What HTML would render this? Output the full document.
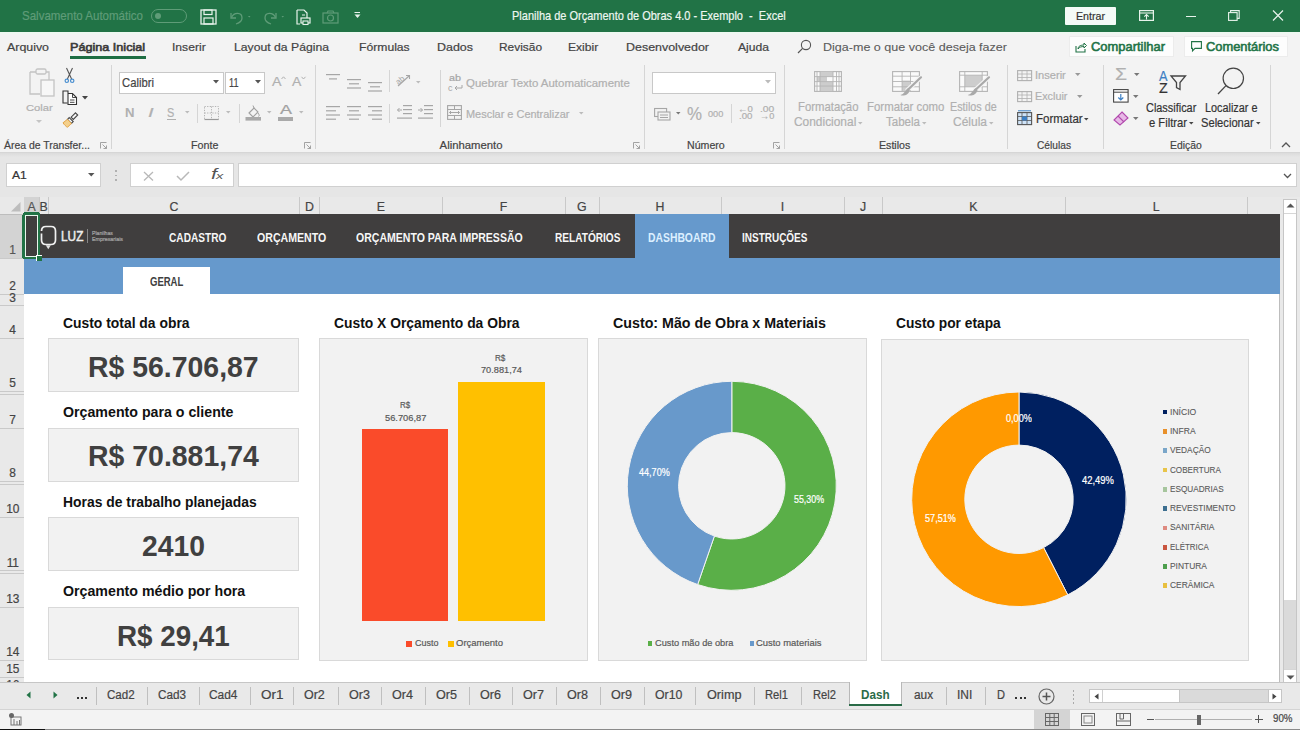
<!DOCTYPE html><html><head><meta charset="utf-8"><style>
html,body{margin:0;padding:0;}
body{width:1300px;height:730px;overflow:hidden;position:relative;background:#f3f3f3;font-family:"Liberation Sans",sans-serif;}
.t{position:absolute;white-space:nowrap;line-height:1;transform-origin:0 0;}
.r{position:absolute;box-sizing:border-box;}
.s{position:absolute;overflow:visible;}
</style></head><body>
<div class="r" style="left:0px;top:0px;width:1300px;height:32px;background:#217346;"></div>
<div class="r" style="left:0px;top:32px;width:1300px;height:2px;background:#eef8f1;"></div>
<div class="t" style="left:22.00px;top:10.00px;font-size:12.35px;color:#5f9c78;-webkit-text-stroke:0.2px #5f9c78;transform:scaleX(0.9322);">Salvamento Automático</div>
<div class="r" style="left:150.5px;top:8.5px;width:36px;height:14.5px;background:transparent;border:1.3px solid #5f9c78;border-radius:8px;"></div>
<div class="r" style="left:155px;top:12.5px;width:6px;height:6px;background:#5f9c78;border-radius:3px;"></div>
<svg class="s" style="left:200px;top:9px;" width="17" height="16" viewBox="0 0 17 16"><rect x="1" y="1" width="15" height="14" fill="none" stroke="#e8f3ec" stroke-width="1.3"/><rect x="4" y="1" width="8" height="4.5" fill="none" stroke="#e8f3ec" stroke-width="1.2"/><rect x="4" y="9" width="9" height="6" fill="none" stroke="#e8f3ec" stroke-width="1.2"/></svg>
<svg class="s" style="left:228px;top:9px;" width="24" height="16" viewBox="0 0 24 16"><path d="M3 4 L3 9 L8 9" fill="none" stroke="#5f9c78" stroke-width="1.3"/><path d="M3.5 8.5 C6 3 14 3 14 9 C14 12 11 14 8 15" fill="none" stroke="#5f9c78" stroke-width="1.3"/><path d="M20 7 l2.5 0 l-1.25 1.6z" fill="#5f9c78"/></svg>
<svg class="s" style="left:262px;top:9px;" width="24" height="16" viewBox="0 0 24 16"><path d="M14 4 L14 9 L9 9" fill="none" stroke="#5f9c78" stroke-width="1.3"/><path d="M13.5 8.5 C11 3 3 3 3 9 C3 12 6 14 9 15" fill="none" stroke="#5f9c78" stroke-width="1.3"/><path d="M19.5 7 l2.5 0 l-1.25 1.6z" fill="#5f9c78"/></svg>
<svg class="s" style="left:296px;top:9px;" width="15" height="16" viewBox="0 0 15 16"><path d="M1 1 H8 L11 4 V9" fill="none" stroke="#e8f3ec" stroke-width="1.2"/><path d="M1 1 V15 H4" fill="none" stroke="#e8f3ec" stroke-width="1.2"/><rect x="5" y="9" width="9" height="5" fill="none" stroke="#e8f3ec" stroke-width="1.2"/><rect x="7" y="12" width="5" height="3.5" fill="#217346" stroke="#e8f3ec" stroke-width="1.1"/><path d="M6 6 H9" stroke="#e8f3ec"/></svg>
<svg class="s" style="left:322px;top:10px;" width="17" height="14" viewBox="0 0 17 14"><rect x="1" y="3" width="15" height="10" fill="none" stroke="#5f9c78" stroke-width="1.2"/><circle cx="8.5" cy="8" r="3" fill="none" stroke="#5f9c78" stroke-width="1.2"/><path d="M5 3 L6 1 H11 L12 3" fill="none" stroke="#5f9c78" stroke-width="1.1"/></svg>
<svg class="s" style="left:354px;top:12px;" width="7" height="7" viewBox="0 0 7 7"><path d="M0.5 0.5 H6" stroke="#e8f3ec" stroke-width="1"/><path d="M0.5 2.5 H6.5 L3.5 6z" fill="#e8f3ec"/></svg>
<div class="t" style="left:512.00px;top:10.00px;font-size:12.35px;color:#eef7f1;-webkit-text-stroke:0.2px #eef7f1;transform:scaleX(0.8906);white-space:pre;">Planilha de Orçamento de Obras 4.0 - Exemplo  -  Excel</div>
<div class="r" style="left:1065px;top:7px;width:51px;height:18px;background:#f4fbf7;border-radius:1px;"></div>
<div class="t" style="left:1076.00px;top:10.00px;font-size:11.63px;color:#333;-webkit-text-stroke:0.2px #333;transform:scaleX(0.9158);">Entrar</div>
<svg class="s" style="left:1139px;top:10px;" width="15" height="11" viewBox="0 0 15 11"><rect x="0.6" y="0.6" width="13.8" height="9.8" fill="none" stroke="#e8f3ec" stroke-width="1.2"/><path d="M0.6 3 H14.4" stroke="#e8f3ec" stroke-width="1.1"/><path d="M7.5 9.5 V4.5 M5.3 6.7 L7.5 4.5 L9.7 6.7" fill="none" stroke="#e8f3ec" stroke-width="1.1"/></svg>
<div class="r" style="left:1185.5px;top:15.5px;width:10.5px;height:1.2px;background:#e8f3ec;"></div>
<svg class="s" style="left:1228px;top:10px;" width="12" height="11" viewBox="0 0 12 11"><rect x="0.6" y="2.6" width="8.5" height="7.8" fill="none" stroke="#e8f3ec" stroke-width="1.1"/><path d="M2.6 2.6 V0.6 H11.2 V8.4 H9.1" fill="none" stroke="#e8f3ec" stroke-width="1.1"/></svg>
<svg class="s" style="left:1272px;top:10px;" width="12" height="11" viewBox="0 0 12 11"><path d="M1 0.5 L11 10.5 M11 0.5 L1 10.5" stroke="#e8f3ec" stroke-width="1.2"/></svg>
<div class="t" style="left:7.00px;top:42.00px;font-size:11.05px;color:#444;-webkit-text-stroke:0.2px #444;transform:scaleX(1.1213);">Arquivo</div>
<div class="t" style="left:171.50px;top:42.00px;font-size:11.05px;color:#444;-webkit-text-stroke:0.2px #444;transform:scaleX(1.0980);">Inserir</div>
<div class="t" style="left:234.00px;top:42.00px;font-size:11.05px;color:#444;-webkit-text-stroke:0.2px #444;transform:scaleX(1.1048);">Layout da Página</div>
<div class="t" style="left:358.50px;top:42.00px;font-size:11.05px;color:#444;-webkit-text-stroke:0.2px #444;transform:scaleX(1.1013);">Fórmulas</div>
<div class="t" style="left:437.00px;top:42.00px;font-size:11.05px;color:#444;-webkit-text-stroke:0.2px #444;transform:scaleX(1.1274);">Dados</div>
<div class="t" style="left:498.50px;top:42.00px;font-size:11.05px;color:#444;-webkit-text-stroke:0.2px #444;transform:scaleX(1.0774);">Revisão</div>
<div class="t" style="left:568.30px;top:42.00px;font-size:11.05px;color:#444;-webkit-text-stroke:0.2px #444;transform:scaleX(1.0933);">Exibir</div>
<div class="t" style="left:626.00px;top:42.00px;font-size:11.05px;color:#444;-webkit-text-stroke:0.2px #444;transform:scaleX(1.1264);">Desenvolvedor</div>
<div class="t" style="left:737.50px;top:42.00px;font-size:11.05px;color:#444;-webkit-text-stroke:0.2px #444;transform:scaleX(1.0972);">Ajuda</div>
<div class="t" style="left:69.70px;top:42.00px;font-size:11.05px;color:#3a3a3a;transform:scaleX(1.1429);-webkit-text-stroke:0.6px #3a3a3a;">Página Inicial</div>
<div class="r" style="left:69.7px;top:56px;width:76.2px;height:3px;background:#1e6e43;"></div>
<svg class="s" style="left:797px;top:39px;" width="15" height="15" viewBox="0 0 15 15"><circle cx="9" cy="6" r="4.6" fill="none" stroke="#555" stroke-width="1.1"/><path d="M5.6 9.4 L1 14" stroke="#555" stroke-width="1.2"/></svg>
<div class="t" style="left:822.50px;top:42.00px;font-size:11.05px;color:#5c5c5c;transform:scaleX(1.1350);-webkit-text-stroke:0.1px #5c5c5c;">Diga-me o que você deseja fazer</div>
<div class="r" style="left:1069px;top:35.5px;width:105px;height:21.5px;background:#fdfdfd;border:1px solid #ececec;"></div>
<svg class="s" style="left:1075px;top:41px;" width="12" height="12" viewBox="0 0 12 12"><path d="M1 5 V11 H10 V8" fill="none" stroke="#217346" stroke-width="1.1"/><path d="M3 8 C3 5 6 4 9 4 V2 L11.5 4.5 L9 7 V5.5 C6.5 5.5 4.5 6 3 8z" fill="none" stroke="#217346" stroke-width="1"/></svg>
<div class="t" style="left:1091.00px;top:41.00px;font-size:12.21px;color:#217346;transform:scaleX(1.0588);-webkit-text-stroke:0.55px #217346;">Compartilhar</div>
<div class="r" style="left:1184px;top:35.5px;width:104px;height:21.5px;background:#fdfdfd;border:1px solid #ececec;"></div>
<svg class="s" style="left:1191px;top:41px;" width="11" height="11" viewBox="0 0 11 11"><path d="M0.6 0.6 H10.4 V7.4 H4 L1.5 10 V7.4 H0.6z" fill="none" stroke="#217346" stroke-width="1.1"/></svg>
<div class="t" style="left:1206.00px;top:41.00px;font-size:12.21px;color:#217346;transform:scaleX(1.0547);-webkit-text-stroke:0.55px #217346;">Comentários</div>
<div class="r" style="left:110.6px;top:65px;width:1px;height:84px;background:#d5d5d5;"></div>
<div class="r" style="left:314.5px;top:65px;width:1px;height:84px;background:#d5d5d5;"></div>
<div class="r" style="left:643.5px;top:65px;width:1px;height:84px;background:#d5d5d5;"></div>
<div class="r" style="left:784.3px;top:65px;width:1px;height:84px;background:#d5d5d5;"></div>
<div class="r" style="left:1006.5px;top:65px;width:1px;height:84px;background:#d5d5d5;"></div>
<div class="r" style="left:1102.7px;top:65px;width:1px;height:84px;background:#d5d5d5;"></div>
<div class="r" style="left:1269.6px;top:65px;width:1px;height:84px;background:#d5d5d5;"></div>
<div class="t" style="left:4.00px;top:140.00px;font-size:11.34px;color:#444;-webkit-text-stroke:0.2px #444;transform:scaleX(0.9221);">Área de Transfer...</div>
<div class="t" style="left:190.80px;top:140.00px;font-size:11.34px;color:#444;-webkit-text-stroke:0.2px #444;transform:scaleX(0.9451);">Fonte</div>
<div class="t" style="left:439.60px;top:140.00px;font-size:11.34px;color:#444;-webkit-text-stroke:0.2px #444;">Alinhamento</div>
<div class="t" style="left:687.00px;top:140.00px;font-size:11.34px;color:#444;-webkit-text-stroke:0.2px #444;transform:scaleX(0.9374);">Número</div>
<div class="t" style="left:879.00px;top:140.00px;font-size:11.34px;color:#444;-webkit-text-stroke:0.2px #444;transform:scaleX(0.9373);">Estilos</div>
<div class="t" style="left:1037.00px;top:140.00px;font-size:11.34px;color:#444;-webkit-text-stroke:0.2px #444;transform:scaleX(0.8992);">Células</div>
<div class="t" style="left:1169.60px;top:140.00px;font-size:11.34px;color:#444;-webkit-text-stroke:0.2px #444;transform:scaleX(0.9144);">Edição</div>
<svg class="s" style="left:100px;top:142px;" width="7" height="7" viewBox="0 0 7 7"><path d="M0.5 6.5 V0.5 H6.5" fill="none" stroke="#999" stroke-width="0.9"/><path d="M2.5 2.5 L6.5 6.5 M6.5 3.5 V6.5 H3.5" fill="none" stroke="#999" stroke-width="0.9"/></svg>
<svg class="s" style="left:304px;top:142px;" width="7" height="7" viewBox="0 0 7 7"><path d="M0.5 6.5 V0.5 H6.5" fill="none" stroke="#999" stroke-width="0.9"/><path d="M2.5 2.5 L6.5 6.5 M6.5 3.5 V6.5 H3.5" fill="none" stroke="#999" stroke-width="0.9"/></svg>
<svg class="s" style="left:633px;top:141.5px;" width="7" height="7" viewBox="0 0 7 7"><path d="M0.5 6.5 V0.5 H6.5" fill="none" stroke="#999" stroke-width="0.9"/><path d="M2.5 2.5 L6.5 6.5 M6.5 3.5 V6.5 H3.5" fill="none" stroke="#999" stroke-width="0.9"/></svg>
<svg class="s" style="left:773px;top:142px;" width="7" height="7" viewBox="0 0 7 7"><path d="M0.5 6.5 V0.5 H6.5" fill="none" stroke="#999" stroke-width="0.9"/><path d="M2.5 2.5 L6.5 6.5 M6.5 3.5 V6.5 H3.5" fill="none" stroke="#999" stroke-width="0.9"/></svg>
<svg class="s" style="left:28px;top:68px;" width="27" height="29" viewBox="0 0 27 29"><path d="M2 4 H8 M18 4 H21 V12" fill="none" stroke="#c4c4c4" stroke-width="1.3"/><path d="M2 4 V26 H12" fill="none" stroke="#c4c4c4" stroke-width="1.3"/><rect x="8" y="1" width="10" height="5" rx="1.5" fill="none" stroke="#c4c4c4" stroke-width="1.3"/><rect x="13" y="12" width="13" height="16" fill="#f7f7f7" stroke="#c4c4c4" stroke-width="1.3"/></svg>
<div class="t" style="left:26.00px;top:103.00px;font-size:9.88px;color:#b0b0b0;-webkit-text-stroke:0.2px #b0b0b0;transform:scaleX(1.1304);">Colar</div>
<svg class="s" style="left:36px;top:120px;" width="6" height="4" viewBox="0 0 6 4"><path d="M0 0 H6 L3 3z" fill="#c4c4c4"/></svg>
<svg class="s" style="left:62px;top:67px;" width="15" height="17" viewBox="0 0 15 17"><path d="M4.5 1 L9.6 12 M10.5 1 L5.4 12" stroke="#555" stroke-width="1.1" fill="none"/><circle cx="4.8" cy="13.8" r="1.7" fill="none" stroke="#4a8fd0" stroke-width="1.2"/><circle cx="10.2" cy="13.8" r="1.7" fill="none" stroke="#4a8fd0" stroke-width="1.2"/></svg>
<svg class="s" style="left:62px;top:90px;" width="17" height="17" viewBox="0 0 17 17"><path d="M6 3 V1 H1 V13 H5.5" fill="none" stroke="#333" stroke-width="1.1"/><path d="M6 3.5 H10.5 L14.5 7.5 V14.5 H6z" fill="#fff" stroke="#333" stroke-width="1.1"/><path d="M10.5 3.5 V7.5 H14.5" fill="none" stroke="#333" stroke-width="0.9"/><path d="M8 10 H12.5 M8 12.3 H12.5" stroke="#333" stroke-width="0.9"/></svg>
<svg class="s" style="left:82px;top:96px;" width="7" height="4" viewBox="0 0 7 4"><path d="M0 0 H6 L3 3.5z" fill="#444"/></svg>
<svg class="s" style="left:62px;top:112px;" width="17" height="16" viewBox="0 0 17 16"><path d="M13.5 0.8 L15.7 3 L11.3 7.4 L9.1 5.2z" fill="none" stroke="#444" stroke-width="1.1"/><path d="M7.2 5.6 L11.2 9.6 L9.4 11.4 L5.4 7.4z" fill="#fff" stroke="#444" stroke-width="1.1"/><path d="M5.4 7.4 L9.4 11.4 L5.5 15.3 C4 14.5 2 12.5 1 10.8z" fill="#f4d08c" stroke="#e3a548" stroke-width="1"/></svg>
<div class="r" style="left:119.4px;top:72px;width:105px;height:21.6px;background:#fff;border:1px solid #c8c8c8;"></div>
<div class="t" style="left:122.00px;top:77.00px;font-size:12.06px;color:#444;-webkit-text-stroke:0.2px #444;transform:scaleX(0.9359);">Calibri</div>
<svg class="s" style="left:213px;top:80px;" width="7" height="4" viewBox="0 0 7 4"><path d="M0 0 H6 L3 3.5z" fill="#555"/></svg>
<div class="r" style="left:225px;top:72px;width:40.4px;height:21.6px;background:#fff;border:1px solid #c8c8c8;"></div>
<div class="t" style="left:228.50px;top:77.00px;font-size:12.06px;color:#444;-webkit-text-stroke:0.2px #444;transform:scaleX(0.7586);">11</div>
<svg class="s" style="left:255px;top:80px;" width="7" height="4" viewBox="0 0 7 4"><path d="M0 0 H6 L3 3.5z" fill="#555"/></svg>
<div class="t" style="left:271.50px;top:76.00px;font-size:12.94px;color:#b0b0b0;-webkit-text-stroke:0.2px #b0b0b0;transform:scaleX(1.1010);">A</div>
<svg class="s" style="left:281px;top:76px;" width="5" height="4" viewBox="0 0 5 4"><path d="M0.5 3 L2.5 0.8 L4.5 3" fill="none" stroke="#a9a9a9" stroke-width="0.9"/></svg>
<div class="t" style="left:291.70px;top:76.00px;font-size:12.94px;color:#b0b0b0;-webkit-text-stroke:0.2px #b0b0b0;transform:scaleX(1.0778);">A</div>
<svg class="s" style="left:301px;top:76px;" width="5" height="4" viewBox="0 0 5 4"><path d="M0.5 0.8 L2.5 3 L4.5 0.8" fill="none" stroke="#a9a9a9" stroke-width="0.9"/></svg>
<div class="t" style="left:124.50px;top:107.00px;font-size:12.94px;color:#b0b0b0;font-weight:bold;transform:scaleX(1.0169);">N</div>
<div class="t" style="left:148.00px;top:107.00px;font-size:12.94px;color:#b0b0b0;-webkit-text-stroke:0.2px #b0b0b0;transform:scaleX(1.5582);font-style:italic;font-family:"Liberation Serif",serif;">I</div>
<div class="t" style="left:167.30px;top:107.00px;font-size:12.94px;color:#b0b0b0;-webkit-text-stroke:0.2px #b0b0b0;transform:scaleX(0.8460);">S</div>
<div class="r" style="left:166.5px;top:118.5px;width:9px;height:1px;background:#b0b0b0;"></div>
<svg class="s" style="left:185px;top:111px;" width="5" height="3" viewBox="0 0 5 3"><path d="M0 0 H4.5 L2.25 2.5z" fill="#bbb"/></svg>
<div class="r" style="left:197.2px;top:104px;width:1px;height:19px;background:#d5d5d5;"></div>
<svg class="s" style="left:204px;top:106px;" width="16" height="15" viewBox="0 0 16 15"><rect x="0.5" y="0.5" width="14" height="13" fill="none" stroke="#b5b5b5" stroke-width="1" stroke-dasharray="1.3 1.3"/><path d="M7.5 0.5 V13.5 M0.5 7 H14.5" stroke="#b5b5b5" stroke-dasharray="1.3 1.3"/><path d="M0.5 13.5 H14.5" stroke="#999" stroke-width="1.2"/></svg>
<svg class="s" style="left:226px;top:111px;" width="5" height="3" viewBox="0 0 5 3"><path d="M0 0 H4.5 L2.25 2.5z" fill="#bbb"/></svg>
<div class="r" style="left:238.8px;top:104px;width:1px;height:19px;background:#d5d5d5;"></div>
<svg class="s" style="left:245px;top:104px;" width="17" height="17" viewBox="0 0 17 17"><path d="M4 9 L9 4 L13 8 L8 13z" fill="none" stroke="#a0a0a0" stroke-width="1.1"/><path d="M9 4 L8 1.5" stroke="#a0a0a0"/><path d="M13 9 C14.5 11 14.5 12 13.5 12.5" fill="none" stroke="#a0a0a0"/><rect x="0.5" y="13" width="15.5" height="3.6" fill="#a9a9a9"/></svg>
<svg class="s" style="left:267px;top:111px;" width="5" height="3" viewBox="0 0 5 3"><path d="M0 0 H4.5 L2.25 2.5z" fill="#bbb"/></svg>
<div class="t" style="left:279.50px;top:104.00px;font-size:12.35px;color:#a0a0a0;-webkit-text-stroke:0.2px #a0a0a0;transform:scaleX(1.4561);">A</div>
<div class="r" style="left:278px;top:117px;width:15px;height:3.6px;background:#a9a9a9;"></div>
<svg class="s" style="left:299px;top:111px;" width="5" height="3" viewBox="0 0 5 3"><path d="M0 0 H4.5 L2.25 2.5z" fill="#bbb"/></svg>
<svg class="s" style="left:326px;top:74.4px;" width="15" height="10" viewBox="0 0 15 10"><rect x="0" y="0.0" width="14" height="1.2" fill="#a6a6a6"/><rect x="3" y="4.3" width="8" height="1.2" fill="#a6a6a6"/></svg>
<div class="r" style="left:326px;top:83px;width:14px;height:0px;background:transparent;"></div>
<svg class="s" style="left:347px;top:78.5px;" width="15" height="14" viewBox="0 0 15 14"><rect x="0" y="0.0" width="14" height="1.2" fill="#a6a6a6"/><rect x="2" y="4.2" width="10" height="1.2" fill="#a6a6a6"/><rect x="0" y="8.4" width="14" height="1.2" fill="#a6a6a6"/></svg>
<svg class="s" style="left:368px;top:81.5px;" width="15" height="14" viewBox="0 0 15 14"><rect x="0" y="0.0" width="14" height="1.2" fill="#a6a6a6"/><rect x="2" y="4.2" width="10" height="1.2" fill="#a6a6a6"/><rect x="0" y="8.4" width="14" height="1.2" fill="#a6a6a6"/></svg>
<div class="r" style="left:389.3px;top:70px;width:1px;height:22px;background:#d5d5d5;"></div>
<svg class="s" style="left:396px;top:74px;" width="17" height="15" viewBox="0 0 17 15"><path d="M2 12 L13 2" stroke="#a6a6a6" stroke-width="1.2"/><path d="M10 1.5 H13.5 V5" fill="none" stroke="#a6a6a6" stroke-width="1.1"/><text x="0" y="9" font-size="8" font-family="Liberation Sans" fill="#a6a6a6" transform="rotate(-40 4 7)">ab</text></svg>
<svg class="s" style="left:416px;top:81px;" width="5" height="3" viewBox="0 0 5 3"><path d="M0 0 H4.5 L2.25 2.5z" fill="#bbb"/></svg>
<div class="r" style="left:440.3px;top:70px;width:1px;height:57px;background:#d5d5d5;"></div>
<div class="t" style="left:449.00px;top:73.00px;font-size:9.45px;color:#a6a6a6;-webkit-text-stroke:0.2px #a6a6a6;transform:scaleX(1.1419);">ab</div>
<svg class="s" style="left:448px;top:84px;" width="16" height="8" viewBox="0 0 16 8"><text x="0" y="7" font-size="9" font-family="Liberation Sans" fill="#a6a6a6">c</text><path d="M14 1 V4 H7 M9 2 L7 4 L9 6" fill="none" stroke="#a6a6a6" stroke-width="1"/></svg>
<div class="t" style="left:465.60px;top:78.00px;font-size:10.76px;color:#b0b0b0;-webkit-text-stroke:0.2px #b0b0b0;transform:scaleX(1.0645);">Quebrar Texto Automaticamente</div>
<svg class="s" style="left:326px;top:106px;" width="15" height="18" viewBox="0 0 15 18"><rect x="0" y="0.0" width="14" height="1.2" fill="#a6a6a6"/><rect x="0" y="4.2" width="10" height="1.2" fill="#a6a6a6"/><rect x="0" y="8.4" width="14" height="1.2" fill="#a6a6a6"/><rect x="0" y="12.600000000000001" width="10" height="1.2" fill="#a6a6a6"/></svg>
<svg class="s" style="left:347px;top:106px;" width="15" height="18" viewBox="0 0 15 18"><rect x="0" y="0.0" width="14" height="1.2" fill="#a6a6a6"/><rect x="2" y="4.2" width="10" height="1.2" fill="#a6a6a6"/><rect x="0" y="8.4" width="14" height="1.2" fill="#a6a6a6"/><rect x="2" y="12.600000000000001" width="10" height="1.2" fill="#a6a6a6"/></svg>
<svg class="s" style="left:368px;top:106px;" width="15" height="18" viewBox="0 0 15 18"><rect x="0" y="0.0" width="14" height="1.2" fill="#a6a6a6"/><rect x="4" y="4.2" width="10" height="1.2" fill="#a6a6a6"/><rect x="0" y="8.4" width="14" height="1.2" fill="#a6a6a6"/><rect x="4" y="12.600000000000001" width="10" height="1.2" fill="#a6a6a6"/></svg>
<div class="r" style="left:389.3px;top:104px;width:1px;height:19px;background:#d5d5d5;"></div>
<svg class="s" style="left:397px;top:105px;" width="16" height="15" viewBox="0 0 16 15"><rect x="6" y="0" width="9" height="1.2" fill="#a6a6a6"/><rect x="6" y="4" width="9" height="1.2" fill="#a6a6a6"/><rect x="6" y="8" width="9" height="1.2" fill="#a6a6a6"/><rect x="0" y="12.5" width="15" height="1.2" fill="#a6a6a6"/><path d="M5 5 H0.5 M2.5 3 L0.5 5 L2.5 7" fill="none" stroke="#a6a6a6" stroke-width="1"/></svg>
<svg class="s" style="left:418px;top:105px;" width="16" height="15" viewBox="0 0 16 15"><rect x="6" y="0" width="9" height="1.2" fill="#a6a6a6"/><rect x="6" y="4" width="9" height="1.2" fill="#a6a6a6"/><rect x="6" y="8" width="9" height="1.2" fill="#a6a6a6"/><rect x="0" y="12.5" width="15" height="1.2" fill="#a6a6a6"/><path d="M0 5 H4.5 M2.5 3 L4.5 5 L2.5 7" fill="none" stroke="#a6a6a6" stroke-width="1"/></svg>
<svg class="s" style="left:447px;top:105px;" width="15" height="15" viewBox="0 0 15 15"><rect x="0.6" y="0.6" width="13.8" height="13.8" fill="none" stroke="#a6a6a6" stroke-width="1.1"/><path d="M0.6 4.5 H14.4 M0.6 10.5 H14.4 M7.5 0.6 V4.5 M7.5 10.5 V14.4" stroke="#a6a6a6"/><path d="M2.5 7.5 H12.5 M4 6 L2.5 7.5 L4 9 M11 6 L12.5 7.5 L11 9" fill="none" stroke="#a6a6a6"/></svg>
<div class="t" style="left:465.60px;top:109.00px;font-size:11.05px;color:#b0b0b0;-webkit-text-stroke:0.2px #b0b0b0;transform:scaleX(0.9908);">Mesclar e Centralizar</div>
<svg class="s" style="left:579px;top:112px;" width="5" height="3" viewBox="0 0 5 3"><path d="M0 0 H4.5 L2.25 2.5z" fill="#bbb"/></svg>
<div class="r" style="left:652px;top:72px;width:124px;height:21.6px;background:#fff;border:1px solid #c8c8c8;"></div>
<svg class="s" style="left:765px;top:80px;" width="7" height="4" viewBox="0 0 7 4"><path d="M0 0 H6 L3 3.5z" fill="#bbb"/></svg>
<svg class="s" style="left:654px;top:106px;" width="17" height="15" viewBox="0 0 17 15"><rect x="0.6" y="2.5" width="12" height="8" fill="none" stroke="#a6a6a6" stroke-width="1.1"/><rect x="4" y="6" width="12" height="8" fill="#f3f3f3" stroke="#a6a6a6" stroke-width="1.1"/><path d="M6 9 H14 M6 11.5 H14" stroke="#a6a6a6"/></svg>
<svg class="s" style="left:676px;top:112px;" width="5" height="3" viewBox="0 0 5 3"><path d="M0 0 H4.5 L2.25 2.5z" fill="#777"/></svg>
<div class="t" style="left:687.00px;top:105.00px;font-size:18.17px;color:#b0b0b0;-webkit-text-stroke:0.2px #b0b0b0;transform:scaleX(0.9285);">%</div>
<div class="t" style="left:707.70px;top:110.00px;font-size:8.72px;color:#b0b0b0;-webkit-text-stroke:0.2px #b0b0b0;transform:scaleX(1.0515);">000</div>
<div class="r" style="left:730.5px;top:104px;width:1px;height:19px;background:#d5d5d5;"></div>
<div class="t" style="left:737.60px;top:105.00px;font-size:8.72px;color:#b0b0b0;-webkit-text-stroke:0.2px #b0b0b0;transform:scaleX(1.0905);">←0</div>
<div class="t" style="left:739.00px;top:112.00px;font-size:8.72px;color:#b0b0b0;-webkit-text-stroke:0.2px #b0b0b0;transform:scaleX(1.1053);">.00</div>
<div class="t" style="left:759.50px;top:105.00px;font-size:8.72px;color:#b0b0b0;-webkit-text-stroke:0.2px #b0b0b0;transform:scaleX(1.1795);">.00</div>
<div class="t" style="left:759.50px;top:112.00px;font-size:8.72px;color:#b0b0b0;-webkit-text-stroke:0.2px #b0b0b0;transform:scaleX(1.0537);">→0</div>
<svg class="s" style="left:814px;top:70.8px;" width="28" height="21" viewBox="0 0 28 21"><rect x="0.6" y="0.6" width="26.8" height="19.8" fill="#fafafa" stroke="#b4b4b4" stroke-width="1.1"/><rect x="6" y="0.6" width="13" height="5" fill="#cdcdcd"/><rect x="3" y="5.6" width="10" height="5" fill="#cdcdcd"/><rect x="6" y="10.6" width="13" height="4.5" fill="#cdcdcd"/><rect x="6" y="15.1" width="13" height="5" fill="#cdcdcd"/><path d="M0.6 5.6 H27.4" stroke="#b4b4b4" stroke-width="0.9"/><path d="M0.6 10.6 H27.4" stroke="#b4b4b4" stroke-width="0.9"/><path d="M0.6 15.1 H27.4" stroke="#b4b4b4" stroke-width="0.9"/><path d="M3 0.6 V20.4" stroke="#b4b4b4" stroke-width="0.9"/><path d="M6 0.6 V20.4" stroke="#b4b4b4" stroke-width="0.9"/><path d="M19 0.6 V20.4" stroke="#b4b4b4" stroke-width="0.9"/><path d="M22.5 0.6 V20.4" stroke="#b4b4b4" stroke-width="0.9"/><path d="M25 0.6 V20.4" stroke="#b4b4b4" stroke-width="0.9"/></svg>
<svg class="s" style="left:892px;top:70.8px;" width="28" height="21" viewBox="0 0 28 21"><rect x="0.6" y="0.6" width="26.8" height="19.8" fill="#fafafa" stroke="#b4b4b4" stroke-width="1.1"/><rect x="10.1" y="9.5" width="8.4" height="10.5" fill="#cdcdcd"/><path d="M0.6 5.2 H27.4" stroke="#b4b4b4" stroke-width="0.9"/><path d="M0.6 10.5 H27.4" stroke="#b4b4b4" stroke-width="0.9"/><path d="M0.6 15.8 H27.4" stroke="#b4b4b4" stroke-width="0.9"/><path d="M10.1 0.6 V20.4" stroke="#b4b4b4" stroke-width="0.9"/><path d="M18.5 0.6 V20.4" stroke="#b4b4b4" stroke-width="0.9"/><path d="M29 6.3 L14.6 19.9" stroke="#f3f3f3" stroke-width="4.5"/><path d="M29 6.3 L15.4 19.3" stroke="#a9a9a9" stroke-width="2.2" stroke-linecap="round"/><path d="M16.2 17.2 C14.0 17.8 12.6 23.0 8.4 24.0 C11.2 25.5 16.8 24.0 17.9 18.9z" fill="#a9a9a9"/></svg>
<svg class="s" style="left:959px;top:70.8px;" width="29" height="21" viewBox="0 0 29 21"><rect x="0.6" y="0.6" width="27.8" height="19.8" fill="#fafafa" stroke="#b4b4b4" stroke-width="1.1"/><rect x="5.8" y="4.2" width="17.4" height="11.6" fill="#cdcdcd"/><path d="M0.6 4.2 H28.4 M0.6 15.8 H28.4 M5.8 0.6 V20.4 M23.2 0.6 V20.4" stroke="#b4b4b4" stroke-width="0.9"/><path d="M30 6.3 L15.1 19.9" stroke="#f3f3f3" stroke-width="4.5"/><path d="M30 6.3 L16.0 19.3" stroke="#a9a9a9" stroke-width="2.2" stroke-linecap="round"/><path d="M16.8 17.2 C14.5 17.8 13.1 23.0 8.7 24.0 C11.6 25.5 17.4 24.0 18.6 18.9z" fill="#a9a9a9"/></svg>
<div class="t" style="left:798.00px;top:101.00px;font-size:12.35px;color:#b0b0b0;-webkit-text-stroke:0.2px #b0b0b0;transform:scaleX(0.9178);">Formatação</div>
<div class="t" style="left:793.70px;top:116.00px;font-size:12.65px;color:#b0b0b0;-webkit-text-stroke:0.2px #b0b0b0;transform:scaleX(0.9428);">Condicional</div>
<svg class="s" style="left:858px;top:122px;" width="5" height="3" viewBox="0 0 5 3"><path d="M0 0 H4.5 L2.25 2.5z" fill="#bbb"/></svg>
<div class="t" style="left:867.00px;top:101.00px;font-size:12.35px;color:#b0b0b0;-webkit-text-stroke:0.2px #b0b0b0;transform:scaleX(0.9253);">Formatar como</div>
<div class="t" style="left:886.00px;top:116.00px;font-size:12.65px;color:#b0b0b0;-webkit-text-stroke:0.2px #b0b0b0;transform:scaleX(0.9124);">Tabela</div>
<svg class="s" style="left:922px;top:122px;" width="5" height="3" viewBox="0 0 5 3"><path d="M0 0 H4.5 L2.25 2.5z" fill="#bbb"/></svg>
<div class="t" style="left:949.60px;top:101.00px;font-size:12.35px;color:#b0b0b0;-webkit-text-stroke:0.2px #b0b0b0;transform:scaleX(0.8719);">Estilos de</div>
<div class="t" style="left:953.00px;top:116.00px;font-size:12.65px;color:#b0b0b0;-webkit-text-stroke:0.2px #b0b0b0;transform:scaleX(0.9484);">Célula</div>
<svg class="s" style="left:989px;top:122px;" width="5" height="3" viewBox="0 0 5 3"><path d="M0 0 H4.5 L2.25 2.5z" fill="#bbb"/></svg>
<svg class="s" style="left:1017px;top:69.5px;" width="16" height="12" viewBox="0 0 16 12"><rect x="0.6" y="0.6" width="14" height="10" fill="none" stroke="#b0b0b0" stroke-width="1.1"/><path d="M0.6 4 H14.6 M0.6 7.5 H14.6 M5 0.6 V10.6 M10 0.6 V10.6" stroke="#b0b0b0" stroke-width="0.8"/></svg>
<div class="t" style="left:1035.00px;top:71.00px;font-size:10.47px;color:#b0b0b0;-webkit-text-stroke:0.2px #b0b0b0;transform:scaleX(1.0593);">Inserir</div>
<svg class="s" style="left:1075px;top:73px;" width="6" height="3.5" viewBox="0 0 6 3.5"><path d="M0 0 H5.5 L2.75 3z" fill="#999"/></svg>
<svg class="s" style="left:1017px;top:90.5px;" width="16" height="12" viewBox="0 0 16 12"><rect x="0.6" y="0.6" width="14" height="10" fill="none" stroke="#b0b0b0" stroke-width="1.1"/><path d="M0.6 4 H14.6 M0.6 7.5 H14.6 M5 0.6 V10.6 M10 0.6 V10.6" stroke="#b0b0b0" stroke-width="0.8"/></svg>
<div class="t" style="left:1035.00px;top:92.00px;font-size:10.47px;color:#b0b0b0;-webkit-text-stroke:0.2px #b0b0b0;transform:scaleX(1.0318);">Excluir</div>
<svg class="s" style="left:1077px;top:95px;" width="6" height="3.5" viewBox="0 0 6 3.5"><path d="M0 0 H5.5 L2.75 3z" fill="#999"/></svg>
<svg class="s" style="left:1017px;top:110px;" width="16" height="16" viewBox="0 0 16 16"><rect x="0.6" y="2.6" width="14" height="12" fill="#cfe3f7" stroke="#555" stroke-width="1.1"/><path d="M0.6 6.5 H14.6 M0.6 10.5 H14.6 M5 2.6 V14.6 M10 2.6 V14.6" stroke="#555" stroke-width="0.8"/><path d="M1 0.8 H14" stroke="#3c7fc4" stroke-width="1"/><rect x="5" y="6.5" width="5" height="4" fill="#3c7fc4"/></svg>
<div class="t" style="left:1035.80px;top:113.00px;font-size:12.50px;color:#333;-webkit-text-stroke:0.2px #333;transform:scaleX(0.9210);">Formatar</div>
<svg class="s" style="left:1084px;top:118px;" width="5" height="3" viewBox="0 0 5 3"><path d="M0 0 H4.5 L2.25 2.5z" fill="#444"/></svg>
<div class="t" style="left:1115.00px;top:67.00px;font-size:15.99px;color:#b0b0b0;-webkit-text-stroke:0.2px #b0b0b0;transform:scaleX(1.2141);">Σ</div>
<svg class="s" style="left:1134px;top:73px;" width="6" height="3.5" viewBox="0 0 6 3.5"><path d="M0 0 H5.5 L2.75 3z" fill="#777"/></svg>
<svg class="s" style="left:1113px;top:89px;" width="16" height="14" viewBox="0 0 16 14"><rect x="0.6" y="0.6" width="14.5" height="12.5" fill="#fff" stroke="#444" stroke-width="1.1"/><path d="M0.6 3.2 H15" stroke="#444"/><path d="M7.8 5 V11 M5.3 8.5 L7.8 11 L10.3 8.5" fill="none" stroke="#3c7fc4" stroke-width="1.2"/></svg>
<svg class="s" style="left:1133px;top:95px;" width="6" height="3.5" viewBox="0 0 6 3.5"><path d="M0 0 H5.5 L2.75 3z" fill="#777"/></svg>
<svg class="s" style="left:1113px;top:111px;" width="16" height="15" viewBox="0 0 16 15"><path d="M9 1 L15 7 L7 14 L1 9z" fill="#e7b8e6" stroke="#b249ae" stroke-width="1.1"/><path d="M5 5 L11 11" stroke="#b249ae" stroke-width="1.1"/></svg>
<svg class="s" style="left:1133px;top:117px;" width="6" height="3.5" viewBox="0 0 6 3.5"><path d="M0 0 H5.5 L2.75 3z" fill="#777"/></svg>
<div class="t" style="left:1158.80px;top:68.00px;font-size:15.12px;color:#3c7fc4;-webkit-text-stroke:0.2px #3c7fc4;transform:scaleX(0.8430);">A</div>
<div class="t" style="left:1158.80px;top:80.00px;font-size:15.26px;color:#333;-webkit-text-stroke:0.2px #333;transform:scaleX(0.9332);">Z</div>
<svg class="s" style="left:1170px;top:75px;" width="17" height="16" viewBox="0 0 17 16"><path d="M1 1 H15.5 L10 7.5 V14.5 L6.5 12.5 V7.5z" fill="none" stroke="#444" stroke-width="1.3"/></svg>
<div class="t" style="left:1146.00px;top:102.00px;font-size:12.50px;color:#333;-webkit-text-stroke:0.2px #333;transform:scaleX(0.8725);">Classificar</div>
<div class="t" style="left:1149.00px;top:117.00px;font-size:12.06px;color:#333;-webkit-text-stroke:0.2px #333;transform:scaleX(0.9294);">e Filtrar</div>
<svg class="s" style="left:1189px;top:122px;" width="5" height="3" viewBox="0 0 5 3"><path d="M0 0 H4.5 L2.25 2.5z" fill="#444"/></svg>
<svg class="s" style="left:1216px;top:66px;" width="30" height="30" viewBox="0 0 30 30"><circle cx="17.3" cy="12.3" r="10.2" fill="none" stroke="#444" stroke-width="1.2"/><path d="M10 19.6 L2 28" stroke="#444" stroke-width="1.3"/></svg>
<div class="t" style="left:1205.00px;top:102.00px;font-size:12.50px;color:#333;-webkit-text-stroke:0.2px #333;transform:scaleX(0.8685);">Localizar e</div>
<div class="t" style="left:1201.30px;top:117.00px;font-size:12.50px;color:#333;-webkit-text-stroke:0.2px #333;transform:scaleX(0.8922);">Selecionar</div>
<svg class="s" style="left:1256px;top:122px;" width="5" height="3" viewBox="0 0 5 3"><path d="M0 0 H4.5 L2.25 2.5z" fill="#444"/></svg>
<svg class="s" style="left:1281px;top:142px;" width="10" height="6" viewBox="0 0 10 6"><path d="M1 5 L5 1 L9 5" fill="none" stroke="#555" stroke-width="1.3"/></svg>
<div class="r" style="left:0px;top:152px;width:1300px;height:1px;background:#d6d6d6;"></div>
<div class="r" style="left:0px;top:153px;width:1300px;height:4px;background:linear-gradient(#dcdcdc,#e6e6e6);"></div>
<div class="r" style="left:0px;top:157px;width:1300px;height:40px;background:#e6e6e6;"></div>
<div class="r" style="left:6px;top:163px;width:95.3px;height:24px;background:#fff;border:1px solid #d0d0d0;"></div>
<div class="t" style="left:11.60px;top:170.00px;font-size:11.05px;color:#333;-webkit-text-stroke:0.2px #333;transform:scaleX(1.0953);">A1</div>
<svg class="s" style="left:88px;top:173px;" width="7" height="4" viewBox="0 0 7 4"><path d="M0 0 H6.5 L3.25 3.5z" fill="#555"/></svg>
<div class="r" style="left:115px;top:170px;width:1.5px;height:1.5px;background:#b0b0b0;"></div>
<div class="r" style="left:115px;top:174.5px;width:1.5px;height:1.5px;background:#b0b0b0;"></div>
<div class="r" style="left:115px;top:179px;width:1.5px;height:1.5px;background:#b0b0b0;"></div>
<div class="r" style="left:130.4px;top:163px;width:104px;height:24px;background:#fff;border:1px solid #d0d0d0;"></div>
<svg class="s" style="left:143px;top:171px;" width="11" height="10" viewBox="0 0 11 10"><path d="M1 1 L10 9.5 M10 1 L1 9.5" stroke="#b8b8b8" stroke-width="1.3"/></svg>
<svg class="s" style="left:176px;top:171px;" width="14" height="10" viewBox="0 0 14 10"><path d="M1 5 L5 9 L13 1" fill="none" stroke="#b8b8b8" stroke-width="1.5"/></svg>
<div class="t" style="left:211.00px;top:168.00px;font-size:13.81px;color:#555;transform:scaleX(1.5641);font-style:italic;font-family:"Liberation Serif",serif;-webkit-text-stroke:0;">f</div>
<div class="t" style="left:216.00px;top:172.00px;font-size:8.43px;color:#555;transform:scaleX(1.7319);font-style:italic;font-family:"Liberation Serif",serif;-webkit-text-stroke:0;">x</div>
<div class="r" style="left:238.3px;top:163px;width:1059px;height:24px;background:#fff;border:1px solid #d0d0d0;"></div>
<svg class="s" style="left:1283px;top:173px;" width="9" height="6" viewBox="0 0 9 6"><path d="M1 1 L4.5 4.5 L8 1" fill="none" stroke="#555" stroke-width="1.3"/></svg>
<div class="r" style="left:0px;top:197px;width:1300px;height:17px;background:#e9e9e9;"></div>
<div class="r" style="left:0px;top:213.5px;width:1279px;height:1px;background:#bdbdbd;"></div>
<svg class="s" style="left:11px;top:201.5px;" width="10" height="9.5" viewBox="0 0 10 9.5"><path d="M9.5 0 V9.5 H0z" fill="#bdbdbd"/></svg>
<div class="r" style="left:24px;top:197px;width:14.5px;height:17px;background:#d3d3d3;"></div>
<div class="r" style="left:24px;top:212px;width:14.5px;height:2px;background:#217346;"></div>
<div class="r" style="left:38.5px;top:197px;width:1px;height:17px;background:#c9c9c9;"></div>
<div class="r" style="left:48px;top:197px;width:1px;height:17px;background:#c9c9c9;"></div>
<div class="r" style="left:299px;top:197px;width:1px;height:17px;background:#c9c9c9;"></div>
<div class="r" style="left:319.2px;top:197px;width:1px;height:17px;background:#c9c9c9;"></div>
<div class="r" style="left:442px;top:197px;width:1px;height:17px;background:#c9c9c9;"></div>
<div class="r" style="left:564.5px;top:197px;width:1px;height:17px;background:#c9c9c9;"></div>
<div class="r" style="left:598.5px;top:197px;width:1px;height:17px;background:#c9c9c9;"></div>
<div class="r" style="left:720.7px;top:197px;width:1px;height:17px;background:#c9c9c9;"></div>
<div class="r" style="left:844px;top:197px;width:1px;height:17px;background:#c9c9c9;"></div>
<div class="r" style="left:881.5px;top:197px;width:1px;height:17px;background:#c9c9c9;"></div>
<div class="r" style="left:1064.7px;top:197px;width:1px;height:17px;background:#c9c9c9;"></div>
<div class="r" style="left:1247px;top:197px;width:1px;height:17px;background:#c9c9c9;"></div>
<div class="t" style="left:27.48px;top:201.00px;font-size:12.35px;color:#555;-webkit-text-stroke:0.2px #555;">A</div>
<div class="t" style="left:39.48px;top:201.00px;font-size:12.35px;color:#444;-webkit-text-stroke:0.2px #444;">B</div>
<div class="t" style="left:169.42px;top:201.00px;font-size:12.35px;color:#444;-webkit-text-stroke:0.2px #444;">C</div>
<div class="t" style="left:305.02px;top:201.00px;font-size:12.35px;color:#444;-webkit-text-stroke:0.2px #444;">D</div>
<div class="t" style="left:376.83px;top:201.00px;font-size:12.35px;color:#444;-webkit-text-stroke:0.2px #444;">E</div>
<div class="t" style="left:499.80px;top:201.00px;font-size:12.35px;color:#444;-webkit-text-stroke:0.2px #444;">F</div>
<div class="t" style="left:577.11px;top:201.00px;font-size:12.35px;color:#444;-webkit-text-stroke:0.2px #444;">G</div>
<div class="t" style="left:655.52px;top:201.00px;font-size:12.35px;color:#444;-webkit-text-stroke:0.2px #444;">H</div>
<div class="t" style="left:780.78px;top:201.00px;font-size:12.35px;color:#444;-webkit-text-stroke:0.2px #444;">I</div>
<div class="t" style="left:859.92px;top:201.00px;font-size:12.35px;color:#444;-webkit-text-stroke:0.2px #444;">J</div>
<div class="t" style="left:969.33px;top:201.00px;font-size:12.35px;color:#444;-webkit-text-stroke:0.2px #444;">K</div>
<div class="t" style="left:1152.71px;top:201.00px;font-size:12.35px;color:#444;-webkit-text-stroke:0.2px #444;">L</div>
<div class="r" style="left:0px;top:214px;width:24px;height:468.5px;background:#e9e9e9;"></div>
<div class="r" style="left:23.5px;top:214px;width:1px;height:468.5px;background:#bdbdbd;"></div>
<div class="r" style="left:0px;top:214px;width:24px;height:44.5px;background:#d3d3d3;"></div>
<div class="r" style="left:22px;top:214px;width:2px;height:44.5px;background:#217346;"></div>
<div class="r" style="left:0px;top:258.0px;width:23.5px;height:1px;background:#c9c9c9;"></div>
<div class="t" style="left:9.36px;top:245.00px;font-size:11.92px;color:#555;-webkit-text-stroke:0.2px #555;">1</div>
<div class="r" style="left:0px;top:293.5px;width:23.5px;height:1px;background:#c9c9c9;"></div>
<div class="t" style="left:9.36px;top:281.00px;font-size:11.92px;color:#444;-webkit-text-stroke:0.2px #444;">2</div>
<div class="r" style="left:0px;top:304.5px;width:23.5px;height:1px;background:#c9c9c9;"></div>
<div class="t" style="left:9.36px;top:293.00px;font-size:11.92px;color:#444;-webkit-text-stroke:0.2px #444;">3</div>
<div class="r" style="left:0px;top:337.7px;width:23.5px;height:1px;background:#c9c9c9;"></div>
<div class="t" style="left:9.36px;top:325.00px;font-size:11.92px;color:#444;-webkit-text-stroke:0.2px #444;">4</div>
<div class="r" style="left:0px;top:391.0px;width:23.5px;height:1px;background:#c9c9c9;"></div>
<div class="t" style="left:9.36px;top:378.00px;font-size:11.92px;color:#444;-webkit-text-stroke:0.2px #444;">5</div>
<div class="r" style="left:0px;top:427.5px;width:23.5px;height:1px;background:#c9c9c9;"></div>
<div class="t" style="left:9.36px;top:415.00px;font-size:11.92px;color:#444;-webkit-text-stroke:0.2px #444;">7</div>
<div class="r" style="left:0px;top:481.0px;width:23.5px;height:1px;background:#c9c9c9;"></div>
<div class="t" style="left:9.36px;top:468.00px;font-size:11.92px;color:#444;-webkit-text-stroke:0.2px #444;">8</div>
<div class="r" style="left:0px;top:517.0px;width:23.5px;height:1px;background:#c9c9c9;"></div>
<div class="t" style="left:6.22px;top:504.00px;font-size:11.92px;color:#444;-webkit-text-stroke:0.2px #444;">10</div>
<div class="r" style="left:0px;top:570.3px;width:23.5px;height:1px;background:#c9c9c9;"></div>
<div class="t" style="left:6.63px;top:558.00px;font-size:11.92px;color:#444;-webkit-text-stroke:0.2px #444;">11</div>
<div class="r" style="left:0px;top:606.5px;width:23.5px;height:1px;background:#c9c9c9;"></div>
<div class="t" style="left:6.22px;top:594.00px;font-size:11.92px;color:#444;-webkit-text-stroke:0.2px #444;">13</div>
<div class="r" style="left:0px;top:660.0px;width:23.5px;height:1px;background:#c9c9c9;"></div>
<div class="t" style="left:6.22px;top:647.00px;font-size:11.92px;color:#444;-webkit-text-stroke:0.2px #444;">14</div>
<div class="r" style="left:0px;top:676.5px;width:23.5px;height:1px;background:#c9c9c9;"></div>
<div class="t" style="left:6.22px;top:664.00px;font-size:11.92px;color:#444;-webkit-text-stroke:0.2px #444;">15</div>
<div class="r" style="left:0px;top:691.5px;width:23.5px;height:1px;background:#c9c9c9;"></div>
<div class="t" style="left:6.22px;top:680.00px;font-size:11.92px;color:#444;-webkit-text-stroke:0.2px #444;">16</div>
<div class="r" style="left:0px;top:394.0px;width:23.5px;height:1px;background:#c9c9c9;"></div>
<div class="r" style="left:0px;top:484.0px;width:23.5px;height:1px;background:#c9c9c9;"></div>
<div class="r" style="left:0px;top:573.3px;width:23.5px;height:1px;background:#c9c9c9;"></div>
<div class="r" style="left:0px;top:213.5px;width:24px;height:1px;background:#bdbdbd;"></div>
<div class="r" style="left:24px;top:214px;width:1255px;height:468px;background:#ffffff;"></div>
<div class="r" style="left:1279px;top:214px;width:1px;height:468px;background:#bdbdbd;"></div>
<div class="r" style="left:24px;top:214px;width:1255.5px;height:44px;background:#403e3e;"></div>
<div class="r" style="left:24px;top:258px;width:1255.5px;height:36px;background:#6699cc;"></div>
<div class="r" style="left:635.3px;top:214px;width:94px;height:44.5px;background:#6699cc;"></div>
<div class="r" style="left:122.6px;top:267.3px;width:87.5px;height:26.7px;background:#ffffff;"></div>
<div class="r" style="left:23px;top:213.3px;width:17px;height:46px;background:transparent;border:2px solid #217346;"></div>
<div class="r" style="left:25px;top:215.3px;width:13px;height:42px;background:transparent;border:1px solid #e8f5ec;"></div>
<div class="r" style="left:36px;top:255px;width:6px;height:6px;background:#217346;border-left:1px solid #fff;border-top:1px solid #fff;"></div>
<svg class="s" style="left:40px;top:225px;" width="18" height="25" viewBox="0 0 18 25"><path d="M1.5 8.5 V15 Q1.5 19.5 6 19.5 H11 Q15.5 19.5 15.5 15 V6 Q15.5 1.5 11 1.5 H6 Q1.5 1.5 1.5 6" fill="none" stroke="#f0f0f0" stroke-width="1.7"/><path d="M5.8 20.3 H10.8 L8.3 24.3z" fill="#e0e0e0"/></svg>
<div class="t" style="left:60.60px;top:230.00px;font-size:13.95px;color:#eeeeee;transform:scaleX(0.8497);-webkit-text-stroke:0.5px #eeeeee;">LUZ</div>
<div class="r" style="left:87px;top:228.8px;width:1px;height:14.2px;background:#888;"></div>
<div class="t" style="left:91.70px;top:231.00px;font-size:5.81px;color:#a9a9a9;-webkit-text-stroke:0.2px #a9a9a9;transform:scaleX(0.8858);">Planilhas</div>
<div class="t" style="left:91.70px;top:237.00px;font-size:5.81px;color:#a9a9a9;-webkit-text-stroke:0.2px #a9a9a9;transform:scaleX(0.9167);">Empresariais</div>
<div class="t" style="left:168.50px;top:232.00px;font-size:12.06px;color:#f7f7f7;font-weight:bold;transform:scaleX(0.8411);">CADASTRO</div>
<div class="t" style="left:256.60px;top:232.00px;font-size:12.06px;color:#f7f7f7;font-weight:bold;transform:scaleX(0.8800);">ORÇAMENTO</div>
<div class="t" style="left:355.50px;top:232.00px;font-size:12.06px;color:#f7f7f7;font-weight:bold;transform:scaleX(0.8752);">ORÇAMENTO PARA IMPRESSÃO</div>
<div class="t" style="left:555.00px;top:232.00px;font-size:12.06px;color:#f7f7f7;font-weight:bold;transform:scaleX(0.8377);">RELATÓRIOS</div>
<div class="t" style="left:648.00px;top:232.00px;font-size:12.06px;color:#dcefff;font-weight:bold;transform:scaleX(0.8608);">DASHBOARD</div>
<div class="t" style="left:742.00px;top:232.00px;font-size:12.06px;color:#f7f7f7;font-weight:bold;transform:scaleX(0.8281);">INSTRUÇÕES</div>
<div class="t" style="left:149.70px;top:275.00px;font-size:13.08px;color:#404040;font-weight:bold;transform:scaleX(0.7273);">GERAL</div>
<div class="t" style="left:62.50px;top:316.00px;font-size:14.83px;color:#111111;font-weight:bold;transform:scaleX(0.9365);">Custo total da obra</div>
<div class="r" style="left:48px;top:338.2px;width:251px;height:53.5px;background:#f2f2f2;border:1px solid #d9d9d9;"></div>
<div class="t" style="left:88.20px;top:352.00px;font-size:29.51px;color:#404040;font-weight:bold;transform:scaleX(0.9634);">R$ 56.706,87</div>
<div class="t" style="left:62.50px;top:405.00px;font-size:14.83px;color:#111111;font-weight:bold;transform:scaleX(0.9575);">Orçamento para o cliente</div>
<div class="r" style="left:48px;top:428px;width:251px;height:53.5px;background:#f2f2f2;border:1px solid #d9d9d9;"></div>
<div class="t" style="left:88.20px;top:441.00px;font-size:29.51px;color:#404040;font-weight:bold;transform:scaleX(0.9640);">R$ 70.881,74</div>
<div class="t" style="left:62.50px;top:495.00px;font-size:14.83px;color:#111111;font-weight:bold;transform:scaleX(0.9366);">Horas de trabalho planejadas</div>
<div class="r" style="left:48px;top:517.4px;width:251px;height:53.5px;background:#f2f2f2;border:1px solid #d9d9d9;"></div>
<div class="t" style="left:141.90px;top:531.00px;font-size:29.51px;color:#404040;font-weight:bold;transform:scaleX(0.9598);">2410</div>
<div class="t" style="left:62.50px;top:584.00px;font-size:14.83px;color:#111111;font-weight:bold;transform:scaleX(0.9575);">Orçamento médio por hora</div>
<div class="r" style="left:48px;top:606.6px;width:251px;height:53.5px;background:#f2f2f2;border:1px solid #d9d9d9;"></div>
<div class="t" style="left:117.30px;top:621.00px;font-size:29.51px;color:#404040;font-weight:bold;transform:scaleX(0.9419);">R$ 29,41</div>
<div class="t" style="left:333.80px;top:315.00px;font-size:15.12px;color:#111111;font-weight:bold;transform:scaleX(0.9168);">Custo X Orçamento da Obra</div>
<div class="t" style="left:612.80px;top:315.00px;font-size:15.12px;color:#111111;font-weight:bold;transform:scaleX(0.9426);">Custo: Mão de Obra x Materiais</div>
<div class="t" style="left:896.20px;top:315.00px;font-size:15.12px;color:#111111;font-weight:bold;transform:scaleX(0.9108);">Custo por etapa</div>
<div class="r" style="left:319.2px;top:338px;width:269px;height:323px;background:#f2f2f2;border:1px solid #d9d9d9;"></div>
<div class="r" style="left:598.2px;top:338.2px;width:269px;height:322.5px;background:#f2f2f2;border:1px solid #d9d9d9;"></div>
<div class="r" style="left:881.1px;top:339.2px;width:368px;height:321.7px;background:#f2f2f2;border:1px solid #d9d9d9;"></div>
<div class="r" style="left:361.8px;top:429px;width:86.5px;height:192.3px;background:#fa4b2a;"></div>
<div class="r" style="left:458px;top:381.5px;width:86.8px;height:239.8px;background:#ffc000;"></div>
<div class="t" style="left:400.10px;top:400.00px;font-size:9.59px;color:#595959;-webkit-text-stroke:0.2px #595959;transform:scaleX(0.8317);">R$</div>
<div class="t" style="left:384.50px;top:413.00px;font-size:9.59px;color:#595959;-webkit-text-stroke:0.2px #595959;transform:scaleX(0.9701);">56.706,87</div>
<div class="t" style="left:495.30px;top:353.00px;font-size:9.59px;color:#595959;-webkit-text-stroke:0.2px #595959;transform:scaleX(0.8481);">R$</div>
<div class="t" style="left:480.50px;top:365.00px;font-size:9.59px;color:#595959;-webkit-text-stroke:0.2px #595959;transform:scaleX(0.9607);">70.881,74</div>
<div class="r" style="left:406px;top:641px;width:6px;height:6px;background:#fa4b2a;"></div>
<div class="t" style="left:414.80px;top:638.00px;font-size:9.88px;color:#595959;-webkit-text-stroke:0.2px #595959;transform:scaleX(0.9102);">Custo</div>
<div class="r" style="left:448.3px;top:641px;width:6px;height:6px;background:#ffc000;"></div>
<div class="t" style="left:456.00px;top:638.00px;font-size:9.88px;color:#595959;-webkit-text-stroke:0.2px #595959;transform:scaleX(0.9614);">Orçamento</div>
<svg class="s" style="left:0;top:0" width="1300" height="730"><path d="M731.80 381.30 A104.5 104.5 0 1 1 697.64 584.56 L714.41 536.08 A53.2 53.2 0 1 0 731.80 432.60Z" fill="#5aaf48" stroke="#f2f2f2" stroke-width="1"/><path d="M697.64 584.56 A104.5 104.5 0 0 1 731.80 381.30 L731.80 432.60 A53.2 53.2 0 0 0 714.41 536.08Z" fill="#6899cb" stroke="#f2f2f2" stroke-width="1"/></svg>
<div class="t" style="left:639.20px;top:468.00px;font-size:10.17px;color:#ffffff;-webkit-text-stroke:0.2px #ffffff;transform:scaleX(0.8925);">44,70%</div>
<div class="t" style="left:794.40px;top:495.00px;font-size:10.17px;color:#ffffff;-webkit-text-stroke:0.2px #ffffff;transform:scaleX(0.8723);">55,30%</div>
<div class="r" style="left:647.6px;top:641px;width:4.5px;height:4.5px;background:#5aaf48;"></div>
<div class="t" style="left:655.00px;top:638.00px;font-size:9.88px;color:#595959;-webkit-text-stroke:0.2px #595959;transform:scaleX(0.9338);">Custo mão de obra</div>
<div class="r" style="left:749.8px;top:641px;width:4.5px;height:4.5px;background:#6899cb;"></div>
<div class="t" style="left:756.00px;top:638.00px;font-size:9.88px;color:#595959;-webkit-text-stroke:0.2px #595959;transform:scaleX(0.9540);">Custo materiais</div>
<svg class="s" style="left:0;top:0" width="1300" height="730"><path d="M1019.00 392.00 A107.3 107.3 0 0 1 1067.77 594.87 L1043.64 547.58 A54.2 54.2 0 0 0 1019.00 445.10Z" fill="#002060" stroke="#f2f2f2" stroke-width="1"/><path d="M1067.77 594.87 A107.3 107.3 0 1 1 1019.00 392.00 L1019.00 445.10 A54.2 54.2 0 1 0 1043.64 547.58Z" fill="#ff9900" stroke="#f2f2f2" stroke-width="1"/></svg>
<div class="t" style="left:1006.00px;top:414.00px;font-size:10.17px;color:#ffffff;-webkit-text-stroke:0.2px #ffffff;transform:scaleX(0.8943);">0,00%</div>
<div class="t" style="left:1081.80px;top:476.00px;font-size:10.17px;color:#ffffff;-webkit-text-stroke:0.2px #ffffff;transform:scaleX(0.9244);">42,49%</div>
<div class="t" style="left:924.80px;top:514.00px;font-size:10.17px;color:#ffffff;-webkit-text-stroke:0.2px #ffffff;transform:scaleX(0.8983);">57,51%</div>
<div class="r" style="left:1162.6px;top:409.7px;width:4.2px;height:4.8px;background:#002060;"></div>
<div class="t" style="left:1170.30px;top:408.00px;font-size:9.30px;color:#595959;transform:scaleX(0.9253);-webkit-text-stroke:0.1px #595959;">INÍCIO</div>
<div class="r" style="left:1162.6px;top:429.0px;width:4.2px;height:4.8px;background:#e8902a;"></div>
<div class="t" style="left:1170.30px;top:427.00px;font-size:9.30px;color:#595959;transform:scaleX(0.9173);-webkit-text-stroke:0.1px #595959;">INFRA</div>
<div class="r" style="left:1162.6px;top:448.3px;width:4.2px;height:4.8px;background:#7aa6c9;"></div>
<div class="t" style="left:1170.30px;top:446.00px;font-size:9.30px;color:#595959;transform:scaleX(0.8947);-webkit-text-stroke:0.1px #595959;">VEDAÇÃO</div>
<div class="r" style="left:1162.6px;top:467.59999999999997px;width:4.2px;height:4.8px;background:#e8c44a;"></div>
<div class="t" style="left:1170.30px;top:466.00px;font-size:9.30px;color:#595959;transform:scaleX(0.8740);-webkit-text-stroke:0.1px #595959;">COBERTURA</div>
<div class="r" style="left:1162.6px;top:486.9px;width:4.2px;height:4.8px;background:#a6c59d;"></div>
<div class="t" style="left:1170.30px;top:485.00px;font-size:9.30px;color:#595959;transform:scaleX(0.8803);-webkit-text-stroke:0.1px #595959;">ESQUADRIAS</div>
<div class="r" style="left:1162.6px;top:506.2px;width:4.2px;height:4.8px;background:#3d6f90;"></div>
<div class="t" style="left:1170.30px;top:504.00px;font-size:9.30px;color:#595959;transform:scaleX(0.8958);-webkit-text-stroke:0.1px #595959;">REVESTIMENTO</div>
<div class="r" style="left:1162.6px;top:525.5px;width:4.2px;height:4.8px;background:#de8a80;"></div>
<div class="t" style="left:1170.30px;top:523.00px;font-size:9.30px;color:#595959;transform:scaleX(0.9062);-webkit-text-stroke:0.1px #595959;">SANITÁRIA</div>
<div class="r" style="left:1162.6px;top:544.8px;width:4.2px;height:4.8px;background:#c9553f;"></div>
<div class="t" style="left:1170.30px;top:543.00px;font-size:9.30px;color:#595959;transform:scaleX(0.8507);-webkit-text-stroke:0.1px #595959;">ELÉTRICA</div>
<div class="r" style="left:1162.6px;top:564.0999999999999px;width:4.2px;height:4.8px;background:#4d9f4d;"></div>
<div class="t" style="left:1170.30px;top:562.00px;font-size:9.30px;color:#595959;transform:scaleX(0.9062);-webkit-text-stroke:0.1px #595959;">PINTURA</div>
<div class="r" style="left:1162.6px;top:583.4px;width:4.2px;height:4.8px;background:#e8c040;"></div>
<div class="t" style="left:1170.30px;top:581.00px;font-size:9.30px;color:#595959;transform:scaleX(0.9063);-webkit-text-stroke:0.1px #595959;">CERÂMICA</div>
<div class="r" style="left:1280px;top:197px;width:20px;height:486px;background:#e9e9e9;"></div>
<div class="r" style="left:1283px;top:199px;width:14px;height:484px;background:#ffffff;border:1px solid #c6c6c6;"></div>
<div class="r" style="left:1284px;top:213px;width:12px;height:1px;background:#d6d6d6;"></div>
<svg class="s" style="left:1286px;top:203px;" width="9" height="5" viewBox="0 0 9 5"><path d="M0.5 4.5 L4.5 0.5 L8.5 4.5z" fill="#555"/></svg>
<div class="r" style="left:1284px;top:600px;width:12px;height:70px;background:#dadada;"></div>
<div class="r" style="left:1284px;top:669px;width:12px;height:1px;background:#d6d6d6;"></div>
<svg class="s" style="left:1286px;top:675px;" width="9" height="5" viewBox="0 0 9 5"><path d="M0.5 0.5 L4.5 4.5 L8.5 0.5z" fill="#555"/></svg>
<div class="r" style="left:0px;top:682px;width:1300px;height:27px;background:#e9e9e9;"></div>
<div class="r" style="left:0px;top:682px;width:1300px;height:1px;background:#c6c6c6;"></div>
<svg class="s" style="left:26px;top:691px;" width="5" height="8" viewBox="0 0 5 8"><path d="M4.5 0.5 L0.5 4 L4.5 7.5z" fill="#217346"/></svg>
<svg class="s" style="left:53px;top:691px;" width="5" height="8" viewBox="0 0 5 8"><path d="M0.5 0.5 L4.5 4 L0.5 7.5z" fill="#217346"/></svg>
<div class="r" style="left:77px;top:697px;width:2px;height:2px;background:#333;"></div>
<div class="r" style="left:81px;top:697px;width:2px;height:2px;background:#333;"></div>
<div class="r" style="left:85px;top:697px;width:2px;height:2px;background:#333;"></div>
<div class="r" style="left:95.8px;top:687px;width:1px;height:18px;background:#bfbfbf;"></div>
<div class="r" style="left:147px;top:687px;width:1px;height:18px;background:#bfbfbf;"></div>
<div class="r" style="left:198.5px;top:687px;width:1px;height:18px;background:#bfbfbf;"></div>
<div class="r" style="left:249.7px;top:687px;width:1px;height:18px;background:#bfbfbf;"></div>
<div class="r" style="left:293.3px;top:687px;width:1px;height:18px;background:#bfbfbf;"></div>
<div class="r" style="left:337.6px;top:687px;width:1px;height:18px;background:#bfbfbf;"></div>
<div class="r" style="left:381.4px;top:687px;width:1px;height:18px;background:#bfbfbf;"></div>
<div class="r" style="left:425.1px;top:687px;width:1px;height:18px;background:#bfbfbf;"></div>
<div class="r" style="left:468.6px;top:687px;width:1px;height:18px;background:#bfbfbf;"></div>
<div class="r" style="left:512.4px;top:687px;width:1px;height:18px;background:#bfbfbf;"></div>
<div class="r" style="left:555.8px;top:687px;width:1px;height:18px;background:#bfbfbf;"></div>
<div class="r" style="left:600.2px;top:687px;width:1px;height:18px;background:#bfbfbf;"></div>
<div class="r" style="left:644px;top:687px;width:1px;height:18px;background:#bfbfbf;"></div>
<div class="r" style="left:694.6px;top:687px;width:1px;height:18px;background:#bfbfbf;"></div>
<div class="r" style="left:754px;top:687px;width:1px;height:18px;background:#bfbfbf;"></div>
<div class="r" style="left:801.2px;top:687px;width:1px;height:18px;background:#bfbfbf;"></div>
<div class="r" style="left:945.5px;top:687px;width:1px;height:18px;background:#bfbfbf;"></div>
<div class="r" style="left:985.3px;top:687px;width:1px;height:18px;background:#bfbfbf;"></div>
<div class="t" style="left:106.60px;top:689.00px;font-size:12.21px;color:#444;-webkit-text-stroke:0.2px #444;transform:scaleX(0.9490);">Cad2</div>
<div class="t" style="left:158.00px;top:689.00px;font-size:12.21px;color:#444;-webkit-text-stroke:0.2px #444;transform:scaleX(0.9593);">Cad3</div>
<div class="t" style="left:209.00px;top:689.00px;font-size:12.21px;color:#444;-webkit-text-stroke:0.2px #444;transform:scaleX(0.9764);">Cad4</div>
<div class="t" style="left:260.50px;top:689.00px;font-size:12.21px;color:#444;-webkit-text-stroke:0.2px #444;transform:scaleX(1.1055);">Or1</div>
<div class="t" style="left:304.40px;top:689.00px;font-size:12.21px;color:#444;-webkit-text-stroke:0.2px #444;transform:scaleX(1.0219);">Or2</div>
<div class="t" style="left:348.50px;top:689.00px;font-size:12.21px;color:#444;-webkit-text-stroke:0.2px #444;transform:scaleX(1.0318);">Or3</div>
<div class="t" style="left:392.00px;top:689.00px;font-size:12.21px;color:#444;-webkit-text-stroke:0.2px #444;transform:scaleX(1.0318);">Or4</div>
<div class="t" style="left:436.00px;top:689.00px;font-size:12.21px;color:#444;-webkit-text-stroke:0.2px #444;transform:scaleX(1.0318);">Or5</div>
<div class="t" style="left:479.50px;top:689.00px;font-size:12.21px;color:#444;-webkit-text-stroke:0.2px #444;transform:scaleX(1.0318);">Or6</div>
<div class="t" style="left:523.00px;top:689.00px;font-size:12.21px;color:#444;-webkit-text-stroke:0.2px #444;transform:scaleX(1.0318);">Or7</div>
<div class="t" style="left:567.00px;top:689.00px;font-size:12.21px;color:#444;-webkit-text-stroke:0.2px #444;transform:scaleX(1.0318);">Or8</div>
<div class="t" style="left:610.50px;top:689.00px;font-size:12.21px;color:#444;-webkit-text-stroke:0.2px #444;transform:scaleX(1.0318);">Or9</div>
<div class="t" style="left:655.00px;top:689.00px;font-size:12.21px;color:#444;-webkit-text-stroke:0.2px #444;transform:scaleX(1.0094);">Or10</div>
<div class="t" style="left:706.50px;top:689.00px;font-size:12.21px;color:#444;-webkit-text-stroke:0.2px #444;transform:scaleX(1.0380);">Orimp</div>
<div class="t" style="left:765.00px;top:689.00px;font-size:12.21px;color:#444;-webkit-text-stroke:0.2px #444;transform:scaleX(0.9159);">Rel1</div>
<div class="t" style="left:813.00px;top:689.00px;font-size:12.21px;color:#444;-webkit-text-stroke:0.2px #444;transform:scaleX(0.9159);">Rel2</div>
<div class="t" style="left:913.60px;top:689.00px;font-size:12.21px;color:#444;-webkit-text-stroke:0.2px #444;transform:scaleX(0.9703);">aux</div>
<div class="t" style="left:957.00px;top:689.00px;font-size:12.21px;color:#444;-webkit-text-stroke:0.2px #444;transform:scaleX(0.9807);">INI</div>
<div class="t" style="left:997.00px;top:689.00px;font-size:12.21px;color:#444;-webkit-text-stroke:0.2px #444;transform:scaleX(0.9073);">D</div>
<div class="r" style="left:849px;top:682px;width:53px;height:24px;background:#ffffff;border-left:1px solid #b8b8b8;border-right:1px solid #b8b8b8;"></div>
<div class="r" style="left:849px;top:704px;width:53px;height:2px;background:#2a6b47;"></div>
<div class="t" style="left:860.70px;top:689.00px;font-size:12.50px;color:#2a6b47;font-weight:bold;transform:scaleX(0.9356);">Dash</div>
<div class="r" style="left:1015px;top:697px;width:2px;height:2px;background:#333;"></div>
<div class="r" style="left:1019.5px;top:697px;width:2px;height:2px;background:#333;"></div>
<div class="r" style="left:1024px;top:697px;width:2px;height:2px;background:#333;"></div>
<svg class="s" style="left:1038px;top:688px;" width="17" height="17" viewBox="0 0 17 17"><circle cx="8.5" cy="8.5" r="7.5" fill="none" stroke="#666" stroke-width="1.2"/><path d="M4.5 8.5 H12.5 M8.5 4.5 V12.5" stroke="#555" stroke-width="1.5"/></svg>
<div class="r" style="left:1072.5px;top:690px;width:1px;height:1.5px;background:#aaa;"></div>
<div class="r" style="left:1072.5px;top:694px;width:1px;height:1.5px;background:#aaa;"></div>
<div class="r" style="left:1072.5px;top:698px;width:1px;height:1.5px;background:#aaa;"></div>
<div class="r" style="left:1072.5px;top:702px;width:1px;height:1.5px;background:#aaa;"></div>
<div class="r" style="left:1089px;top:689.4px;width:192.5px;height:13.6px;background:#dadada;border:1px solid #c6c6c6;"></div>
<div class="r" style="left:1090px;top:690.4px;width:12px;height:11.6px;background:#ffffff;"></div>
<div class="r" style="left:1102px;top:690.4px;width:78px;height:11.6px;background:#ffffff;border-left:1px solid #d0d0d0;border-right:1px solid #c6c6c6;"></div>
<div class="r" style="left:1268px;top:690.4px;width:12.5px;height:11.6px;background:#ffffff;border-left:1px solid #c6c6c6;"></div>
<svg class="s" style="left:1094px;top:693px;" width="5" height="7" viewBox="0 0 5 7"><path d="M4.5 0.5 L0.5 3.5 L4.5 6.5z" fill="#444"/></svg>
<svg class="s" style="left:1272px;top:693px;" width="5" height="7" viewBox="0 0 5 7"><path d="M0.5 0.5 L4.5 3.5 L0.5 6.5z" fill="#444"/></svg>
<div class="r" style="left:0px;top:709px;width:1300px;height:21px;background:#f3f3f3;"></div>
<div class="r" style="left:0px;top:708.5px;width:1300px;height:1px;background:#d4d4d4;"></div>
<svg class="s" style="left:8px;top:712px;" width="14" height="14" viewBox="0 0 14 14"><rect x="3" y="5" width="10" height="8" fill="none" stroke="#777" stroke-width="1"/><path d="M6 7 V13 M9 9 V13 M11.5 8 V13" stroke="#777"/><circle cx="3.5" cy="3.5" r="2.5" fill="#666"/></svg>
<div class="r" style="left:1034px;top:709.5px;width:36px;height:20.5px;background:#d4d4d4;"></div>
<svg class="s" style="left:1045px;top:713px;" width="14" height="13" viewBox="0 0 14 13"><rect x="0.5" y="0.5" width="13" height="12" fill="none" stroke="#666"/><path d="M0.5 4.5 H13.5 M0.5 8.5 H13.5 M4.8 0.5 V12.5 M9.2 0.5 V12.5" stroke="#666"/></svg>
<svg class="s" style="left:1081px;top:713px;" width="14" height="13" viewBox="0 0 14 13"><rect x="0.5" y="0.5" width="13" height="12" fill="none" stroke="#666"/><rect x="3" y="3" width="8" height="7" fill="none" stroke="#888"/></svg>
<svg class="s" style="left:1116px;top:713px;" width="15" height="13" viewBox="0 0 15 13"><rect x="0.5" y="0.5" width="14" height="12" fill="none" stroke="#666"/><path d="M4 0.5 V6 H7.5 V0.5 M0.5 8 H14.5" fill="none" stroke="#666"/></svg>
<div class="r" style="left:1147px;top:718.5px;width:7px;height:1.5px;background:#555;"></div>
<div class="r" style="left:1155px;top:719px;width:97px;height:1px;background:#b0b0b0;"></div>
<div class="r" style="left:1197px;top:714.5px;width:4px;height:10px;background:#666;"></div>
<div class="r" style="left:1254.5px;top:718.5px;width:8px;height:1.5px;background:#555;"></div>
<div class="r" style="left:1257.75px;top:715.25px;width:1.5px;height:8px;background:#555;"></div>
<div class="t" style="left:1272.50px;top:713.00px;font-size:11.34px;color:#444;-webkit-text-stroke:0.2px #444;transform:scaleX(0.8594);">90%</div>
<div class="r" style="left:0px;top:728.6px;width:45px;height:1.4px;background:#111;"></div>
<div class="r" style="left:45px;top:728.6px;width:1255px;height:1.4px;background:#8a8a8a;"></div>
</body></html>
